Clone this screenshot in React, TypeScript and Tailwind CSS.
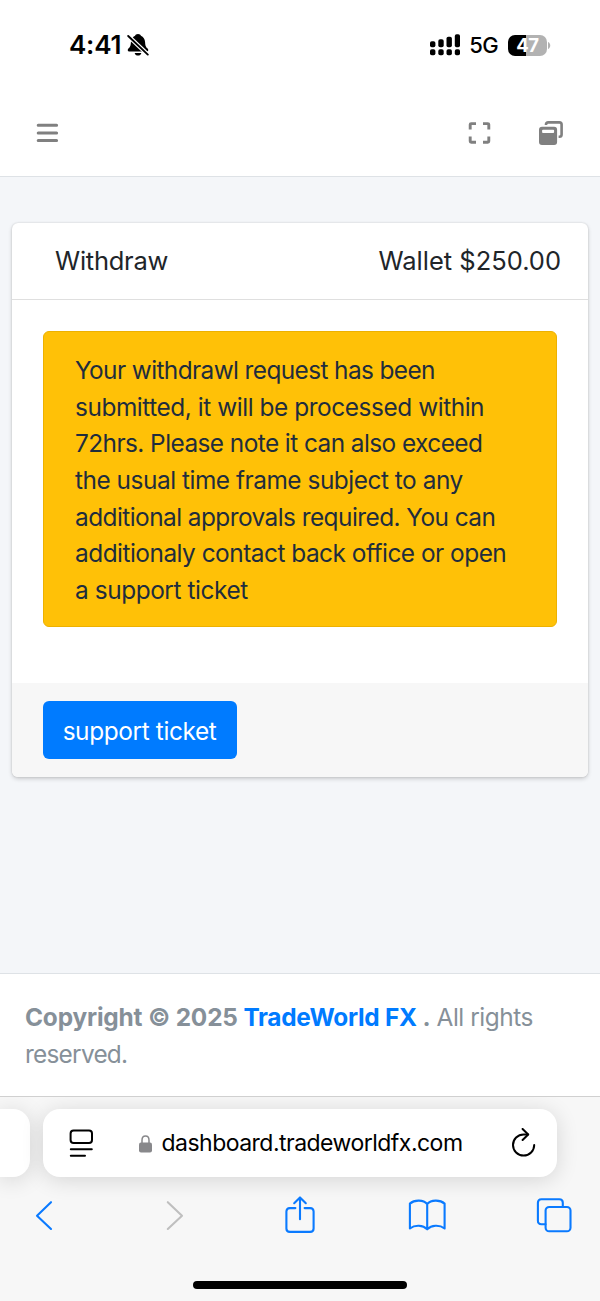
import type { ReactNode } from 'react'

type IconProps = {
  className?: string
}

function BellOffIcon({ className }: IconProps) {
  return (
    <svg width="22" height="24" viewBox="0 0 22 24" className={className}>
      <path
        d="M11 1C9.4 1 8.4 1.8 8.1 2.7C5.6 3.6 4.1 6 3.9 9.2C3.7 12.8 3.2 13.8 1.4 15.6C0.3 16.7 0.6 18.6 2.2 18.6H19.8C21.4 18.6 21.7 16.7 20.6 15.6C18.8 13.8 18.3 12.8 18.1 9.2C17.9 6 16.4 3.6 13.9 2.7C13.6 1.8 12.6 1 11 1Z"
        fill="#000"
      />
      <path d="M7.7 19.9H14.3C13.9 21.7 12.6 22.6 11 22.6C9.4 22.6 8.1 21.7 7.7 19.9Z" fill="#000" />
      <path d="M0.5 2.3L21 21.8" stroke="#fff" strokeWidth="4.2" />
      <path d="M1.2 3L20.8 21.6" stroke="#000" strokeWidth="1.9" strokeLinecap="round" />
    </svg>
  )
}

function SignalIcon() {
  return (
    <svg width="32" height="22" viewBox="0 0 32 22" fill="#000">
      <rect x="1" y="7.2" width="5.4" height="6" rx="1.8" />
      <rect x="9.3" y="5.2" width="5.4" height="8" rx="1.8" />
      <rect x="17.5" y="2.8" width="5.4" height="10.4" rx="1.8" />
      <rect x="25.8" y="0.3" width="5.2" height="12.9" rx="1.8" />
      <rect x="1" y="15.2" width="5.4" height="6" rx="1.8" />
      <rect x="9.3" y="15.2" width="5.4" height="6" rx="1.8" />
      <rect x="17.5" y="15.2" width="5.4" height="6" rx="1.8" />
      <rect x="25.8" y="15.2" width="5.2" height="6" rx="1.8" />
    </svg>
  )
}

function Battery() {
  return (
    <div className="flex items-center gap-px">
      <div className="flex h-[21px] w-[39px] items-center justify-center rounded-[7px] bg-[linear-gradient(90deg,#000_0_18px,#b2b2b2_18px)] text-[18.5px] leading-none font-bold tracking-[-0.4px] text-white">
        47
      </div>
      <svg width="3" height="7" viewBox="0 0 3 7">
        <path d="M0 0C3 1.2 3 5.8 0 7Z" fill="#b2b2b2" />
      </svg>
    </div>
  )
}

function StatusBar() {
  return (
    <div className="flex h-[88px] items-start justify-between bg-white pt-[33px] pr-[49px] pl-[69px] text-black">
      <div className="flex h-6 items-center gap-[6px]">
        <span className="pb-[2px] text-[26px] font-semibold tracking-[-0.2px]">4:41</span>
        <BellOffIcon />
      </div>
      <div className="flex h-6 items-center">
        <SignalIcon />
        <span className="mr-[10px] ml-2 text-[22px] font-medium tracking-[-0.6px]">5G</span>
        <Battery />
      </div>
    </div>
  )
}

function Navbar() {
  return (
    <nav className="flex h-[89px] items-center justify-between border-b border-[#dee2e6] bg-white px-9 pt-px">
      <button type="button" aria-label="Menu">
        <svg width="23" height="22" viewBox="0 0 23 22">
          <path
            d="M2.2 3.2H20.6M2.2 10.9H20.6M2.2 18.6H20.6"
            stroke="#808080"
            strokeWidth="3"
            strokeLinecap="round"
          />
        </svg>
      </button>
      <div className="flex items-center gap-[47px]">
        <button type="button" aria-label="Fullscreen">
          <svg width="23" height="23" viewBox="0 0 23 23">
            <path
              d="M2.2 8.4V3.6Q2.2 2.6 3.2 2.6H8M15 2.6H19.8Q20.8 2.6 20.8 3.6V8.4M20.8 15.4V20.2Q20.8 21.2 19.8 21.2H15M8 21.2H3.2Q2.2 21.2 2.2 20.2V15.4"
              fill="none"
              stroke="#808080"
              strokeWidth="2.9"
            />
          </svg>
        </button>
        <button type="button" aria-label="Windows">
          <svg width="26" height="26" viewBox="0 0 26 26">
            <path
              d="M8 5V4.6Q8 2.4 10.2 2.4H21.4Q23.6 2.4 23.6 4.6V14.6Q23.6 16.8 21.4 16.8H20.6"
              fill="none"
              stroke="#808080"
              strokeWidth="2.6"
            />
            <path
              fillRule="evenodd"
              d="M4 6.8H16.1Q19.1 6.8 19.1 9.8V22Q19.1 25 16.1 25H4Q1 25 1 22V9.8Q1 6.8 4 6.8ZM5 9.7Q4.1 9.7 4.1 10.6V12.1Q4.1 13 5 13H15.2Q16.1 13 16.1 12.1V10.6Q16.1 9.7 15.2 9.7Z"
              fill="#808080"
            />
          </svg>
        </button>
      </div>
    </nav>
  )
}

function WithdrawCard() {
  return (
    <section className="mx-3 overflow-hidden rounded-md bg-white shadow-[0_0_2px_rgba(0,0,0,0.16),0_2px_4px_rgba(0,0,0,0.17)]">
      <header className="flex h-[77px] items-center justify-between border-b border-[#dfdfdf] pr-[27px] pl-[43px] text-[25.5px]">
        <h1 className="tracking-[-0.25px]">Withdraw</h1>
        <span>Wallet $250.00</span>
      </header>
      <div className="px-[31px] pt-[31px] pb-14">
        <div
          role="alert"
          className="h-[296px] rounded-md border border-[#edb100] bg-[#ffc107] px-[31px] pt-5 text-[24.4px] leading-[36.65px] tracking-[-0.5px] whitespace-nowrap text-[#1f2d3d]"
        >
          <span className="tracking-[-0.6px]">Your withdrawl request has been</span>
          <br />
          <span className="tracking-[-0.44px]">submitted, it will be processed within</span>
          <br />
          <span className="tracking-[-0.56px]">72hrs. Please note it can also exceed</span>
          <br />
          <span className="tracking-[-0.47px]">the usual time frame subject to any</span>
          <br />
          <span className="tracking-[-0.55px]">additional approvals required. You can</span>
          <br />
          additionaly contact back office or open
          <br />
          <span className="tracking-[-0.43px]">a support ticket</span>
        </div>
      </div>
      <footer className="flex h-[94px] items-start bg-[#f7f7f7] px-[31px] pt-[18px]">
        <button
          type="button"
          className="h-[58px] w-[194px] rounded-md bg-[#007bff] pt-[2px] pr-px text-[24.4px] tracking-[-0.38px] whitespace-nowrap text-white"
        >
          support ticket
        </button>
      </footer>
    </section>
  )
}

function PageFooter() {
  return (
    <footer className="h-[123px] border-t border-[#dee2e6] bg-white px-[25px] pt-[25px] text-[24.4px] leading-[36.65px] tracking-[-0.75px] text-[#869099]">
      <strong className="font-bold tracking-[-0.17px]">
        Copyright © 2025 <a className="tracking-[-0.26px] text-[#007bff]">TradeWorld FX</a> .
      </strong>{' '}
      <span className="tracking-[-0.45px]">All rights</span>
      <br />
      reserved.
    </footer>
  )
}

function AddressBar() {
  return (
    <div className="flex gap-[13px]">
      <div className="h-[68px] w-[30px] rounded-r-[17px] bg-white shadow-[0_3px_22px_rgba(0,0,0,0.14)]" />
      <div className="flex h-[68px] w-[514px] items-center rounded-[17px] bg-white pr-[21px] pl-[26px] shadow-[0_3px_22px_rgba(0,0,0,0.14)]">
        <svg width="25" height="28" viewBox="0 0 25 28" fill="none" stroke="#000" strokeWidth="2" strokeLinecap="round">
          <rect x="1.6" y="1.4" width="21.4" height="12.6" rx="3" />
          <path d="M1.8 20.2H22.8M1.8 26.7H16" />
        </svg>
        <div className="flex flex-1 items-center justify-center gap-[9px] pt-px pr-[3px]">
          <svg width="13" height="18" viewBox="0 0 13 18">
            <path d="M3 9V5.2Q3 1 6.5 1Q10 1 10 5.2V9" fill="none" stroke="#88888b" strokeWidth="1.5" />
            <rect x="0" y="7.4" width="13" height="10.2" rx="2" fill="#88888b" />
          </svg>
          <span className="text-[23px] tracking-[-0.52px] text-black">dashboard.tradeworldfx.com</span>
        </div>
        <svg width="25" height="30" viewBox="0 0 25 30" fill="none" stroke="#000" strokeWidth="2" strokeLinecap="round" strokeLinejoin="round">
          <path d="M17 6.4H12.6A10.6 10.6 0 1 0 23.2 17" />
          <path d="M11.6 1L17.2 6.5L11.6 12" />
        </svg>
      </div>
    </div>
  )
}

function ToolButton({ label, children }: { label: string; children: ReactNode }) {
  return (
    <button type="button" aria-label={label}>
      <svg
        width="36"
        height="40"
        viewBox="0 0 36 40"
        fill="none"
        stroke={label === 'Forward' ? '#bfbfbf' : '#0a7aff'}
        strokeWidth="2.1"
        strokeLinecap="round"
        strokeLinejoin="round"
        className="overflow-visible"
      >
        {children}
      </svg>
    </button>
  )
}

function BrowserChrome() {
  return (
    <div className="flex h-[205px] flex-col items-stretch overflow-hidden border-t border-[#d0d0d0] bg-[#f7f7f7] pt-3">
      <AddressBar />
      <div className="mt-[18px] flex items-center justify-between pr-[28px] pl-[27px]">
        <ToolButton label="Back">
          <path d="M24 7.2L10 20.7L24 34" />
        </ToolButton>
        <ToolButton label="Forward">
          <path d="M13.8 7.2L28 20.7L13.8 34" />
        </ToolButton>
        <ToolButton label="Share">
          <path d="M13.4 13.1H7.8Q4.4 13.1 4.4 16.5V33.5Q4.4 36.9 7.8 36.9H28.2Q31.6 36.9 31.6 33.5V16.5Q31.6 13.1 28.2 13.1H22.6" />
          <path d="M18 24.2V2.7M12.2 8.2L18 2.4L23.8 8.2" />
        </ToolButton>
        <ToolButton label="Bookmarks">
          <path d="M18.2 9C14.5 4.7 5.5 4.5 0.9 8.6V33.5C6 29.6 14 30 18.2 34.3C22.4 30 30.5 29.6 35.6 33.5V8.6C31 4.5 21.9 4.7 18.2 9ZM18.2 9V34" />
        </ToolButton>
        <ToolButton label="Tabs">
          <path d="M9.5 29.2H5.4Q1.9 29.2 1.9 25.7V7.8Q1.9 4.3 5.4 4.3H23.3Q26.8 4.3 26.8 7.8V11.6" />
          <rect x="9.6" y="12" width="24.9" height="24.3" rx="3.6" />
        </ToolButton>
      </div>
      <div className="mt-[46px] h-2 w-[214px] shrink-0 self-center rounded-full bg-black" />
    </div>
  )
}

export default function App() {
  return (
    <div className="flex h-[1301px] w-[600px] flex-col overflow-hidden bg-[#f4f6f9] font-['Inter','Liberation_Sans',sans-serif] text-[#212529]">
      <StatusBar />
      <Navbar />
      <main className="flex-1 pt-[46px]">
        <WithdrawCard />
      </main>
      <PageFooter />
      <BrowserChrome />
    </div>
  )
}
